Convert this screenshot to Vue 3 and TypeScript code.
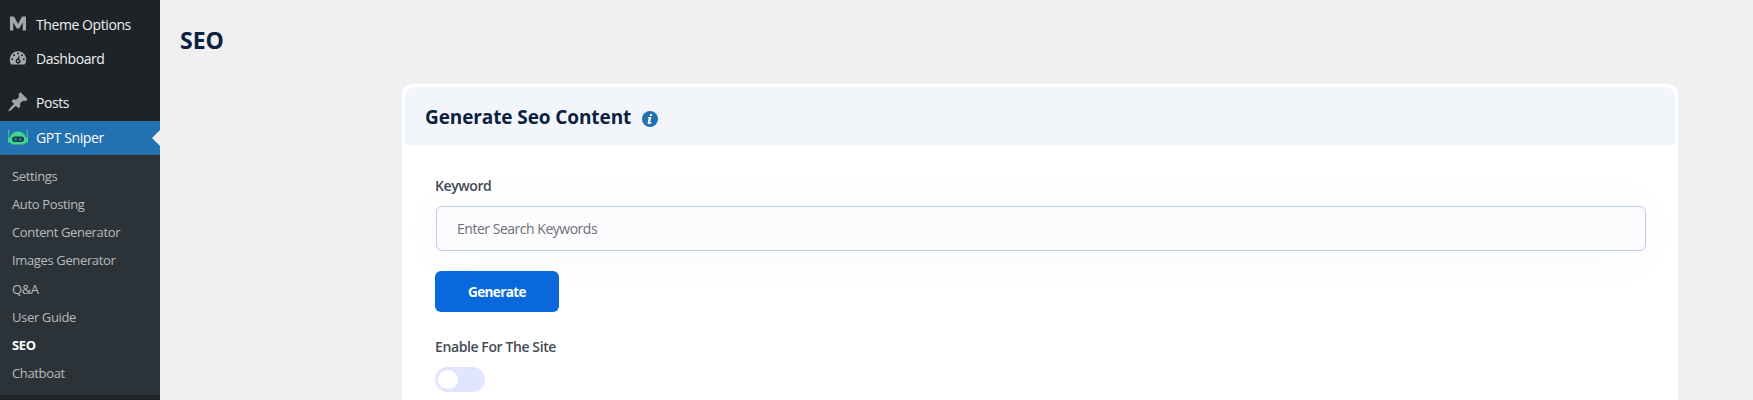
<script setup lang="ts">
import { ref } from 'vue'

const pages: string[] = ['Settings', 'Auto Posting', 'Content Generator', 'Images Generator', 'Q&A', 'User Guide', 'SEO', 'Chatboat']
const current = ref('SEO')
const keyword = ref('')
const enabled = ref(false)
</script>

<template>
  <div class="layout">
    <aside class="sidebar">
      <a class="row">
        <svg class="icon" viewBox="0 0 20 20"><path d="M2 16.500V2.500h4L10 10l4-7.500h4v14h-3.300V8.500L11.200 14.500H8.800L5.300 8.500v8z" fill="#a3a7ab" /></svg>
        <span>Theme Options</span>
      </a>
      <a class="row">
        <svg class="icon" viewBox="0 0 20 20">
          <path d="M3.400 16.500h13.200A8.300 8.300 0 0 0 10 3.300a8.300 8.300 0 0 0-6.600 13.200z" fill="#a7aaad" />
          <g fill="#1d2327">
            <circle cx="10" cy="5.500" r="1" /><circle cx="6" cy="7.300" r="1" /><circle cx="14" cy="7.300" r="1" />
            <circle cx="4.200" cy="11.300" r="1" /><circle cx="15.800" cy="11.300" r="1" />
            <path d="M11.500 7 11.200 10.900a2.500 2.500 0 1 1-2-.1z" />
          </g>
          <circle cx="10" cy="13" r=".9" fill="#a7aaad" />
        </svg>
        <span>Dashboard</span>
      </a>
      <div class="separator"></div>
      <a class="row">
        <svg class="icon pin" viewBox="1 1 18 18"><path d="M10.440 3.020l1.820-1.820 6.360 6.350-1.830 1.820c-1.050-.68-2.480-.57-3.410.36l-.75.75c-.92.93-1.040 2.350-.35 3.410l-1.830 1.820-2.410-2.410-2.800 2.790c-.42.42-3.380 2.710-3.800 2.290s1.860-3.390 2.280-3.810l2.790-2.790L4.100 9.360l1.830-1.820c1.050.69 2.480.57 3.400-.36l.75-.75c.93-.92 1.050-2.350.36-3.410z" fill="#a0a5ab" /></svg>
        <span>Posts</span>
      </a>
      <a class="row active">
        <svg class="icon" viewBox="0 0 20 20">
          <path d="M.700 2.500v12M19.300 2.500v12" stroke="#43b4a3" stroke-width="1.300" />
          <path d="M0 11h2C3 7 6 4.500 10 4.500S17 7 18 11h2v4.500h-2L16 17.500H4l-2-2H0z" fill="#43d68b" />
          <rect x="4" y="9.500" width="12" height="5.500" rx="2.750" fill="#173b5c" />
          <path d="M6.500 11.200h2.300v2.300H6.500zM11.200 11.200h2.300v2.300h-2.300z" fill="#328e91" />
        </svg>
        <span>GPT Sniper</span>
      </a>
      <nav class="submenu">
        <a v-for="page in pages" :key="page" :class="{ current: page === current }" @click="current = page">{{ page }}</a>
      </nav>
    </aside>
    <main class="content">
      <h1>SEO</h1>
      <section class="card">
        <header>
          <h2>Generate Seo Content</h2>
          <svg class="info" viewBox="0 0 16 16"><circle cx="8" cy="8" r="8" fill="#2271b1" /><path d="M8.200 3h2.100l-.5 1.900H7.700zM6.200 6h3.200l-1.300 5h1.400l-.3 1.500c-1.700.8-4 .8-3.500-1L6.700 7.200h-.9z" fill="#fff" /></svg>
        </header>
        <form @submit.prevent>
          <label class="keyword-label" for="keyword">Keyword</label>
          <input id="keyword" v-model="keyword" placeholder="Enter Search Keywords">
          <button type="submit"><span>Generate</span></button>
          <label class="site-label">Enable For The Site</label>
          <div class="toggle" :class="{ on: enabled }" role="switch" :aria-checked="enabled" @click="enabled = !enabled"></div>
        </form>
      </section>
    </main>
  </div>
</template>

<style>
body { background: #f0f0f0; overflow: hidden; }
</style>

<style scoped>
* { box-sizing: border-box; }
.layout { display: flex; height: 400px; overflow: hidden; background: #f0f0f0; font-family: "Open Sans", "Noto Sans", sans-serif; }
.sidebar { width: 160px; flex: none; padding-top: 8px; background: #1d2327; color: #f0f0f1; }
.row { position: relative; display: flex; align-items: center; height: 34px; padding: 0 0 2px 8px; font-size: 14px; letter-spacing: -.42px; }
.row span { margin-left: 8px; white-space: nowrap; }
.icon { flex: none; width: 20px; height: 20px; }
.separator { height: 10px; }
.active { margin-top: 1px; background: #2271b1; color: #fff; }
.active::after { content: ""; position: absolute; right: 0; top: 9px; border: 8px solid transparent; border-left: 0; border-right-color: #f0f0f0; }
.submenu { display: flex; flex-direction: column; height: 240px; padding: 7px 0; background: #2c3338; }
.submenu a { height: 28.150px; padding-left: 12px; color: #b8bbbe; font-size: 13px; line-height: 28px; letter-spacing: -.36px; }
.submenu .current { color: #fff; font-weight: 700; }
.content { flex: 1; padding: 24px 75px 0 20px; }
h1 { margin: 0; height: 32px; color: #0a2140; font-size: 23px; line-height: 32px; font-weight: 700; letter-spacing: 0; }
.card { width: 1276px; height: 360px; margin: 28px 0 0 222px; border: 3px solid #fff; border-radius: 10px; background: #fff; }
.card header { display: flex; align-items: center; height: 58px; padding: 2px 0 0 20px; border-radius: 10px 10px 0 0; background: #f2f6fb; }
h2 { margin: 0; width: 206px; color: #0a2140; font-size: 19px; line-height: 26px; font-weight: 700; letter-spacing: -.1px; white-space: nowrap; }
.info { width: 16px; height: 16px; margin: 3px 0 0 11px; }
form { display: flex; flex-direction: column; align-items: flex-start; padding: 31px 29px 0 30px; }
label { height: 20px; font-size: 14px; line-height: 20px; font-weight: 600; letter-spacing: -.4px; color: #434b57; }
input { width: 1210px; height: 45px; margin: 10px 0 0 1px; padding: 0 20px 1px; border: 1px solid #b9cee6; border-radius: 6px; outline: 0; background: #fcfcfe; box-shadow: 0 4px 60px rgba(0, 0, 0, .03); color: #3c434a; font: 14px "Open Sans", sans-serif; letter-spacing: -.48px; }
input::placeholder { color: #6c7077; opacity: 1; }
button { width: 124px; height: 41px; margin-top: 20px; border: 0; border-radius: 6px; background: #0969dc; color: #fff; font: 700 13.5px "Open Sans", sans-serif; letter-spacing: -.6px; }
.site-label { margin-top: 25px; }
.toggle { display: flex; align-items: center; width: 50px; height: 25px; margin-top: 10px; padding: 3px; border-radius: 13px; background: #e1e5ff; }
.toggle::before { content: ""; width: 20px; height: 19px; border-radius: 50%; background: #fff; }
.toggle.on { justify-content: flex-end; background: #0969dc; }
</style>
